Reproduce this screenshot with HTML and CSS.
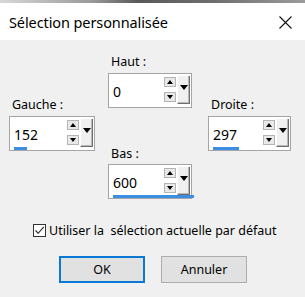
FILE: index.html
```html
<!DOCTYPE html>
<html lang="fr">
<head>
<meta charset="utf-8">
<link rel="stylesheet" href="styles.css">
</head>
<body>
<div class="top"></div>
<div class="titlebar">
  <span class="title">Sélection personnalisée</span>
  <svg class="close" width="13" height="13" viewBox="0 0 13 13"><path d="M0.5 0.5 L12.5 12.5 M12.5 0.5 L0.5 12.5" stroke="#111" stroke-width="1.1" fill="none"/></svg>
</div>
<div class="fields">
  <div class="col side">
    <div class="label">Gauche :</div>
    <div class="field">
      <div class="row">
        <div class="value">152</div>
        <div class="spins"><div class="spin"><span class="up"></span></div><div class="spin"><span class="down"></span></div></div>
        <div class="drop"><span class="dtri"></span></div>
      </div>
      <div class="barrow"><div class="bar" style="width:13px"></div></div>
    </div>
  </div>
  <div class="col mid">
    <div class="label">Haut :</div>
    <div class="field">
      <div class="row">
        <div class="value">0</div>
        <div class="spins"><div class="spin"><span class="up"></span></div><div class="spin"><span class="down"></span></div></div>
        <div class="drop"><span class="dtri"></span></div>
      </div>
      <div class="barrow"><div class="bar" style="width:0px"></div></div>
    </div>
    <div class="label second">Bas :</div>
    <div class="field">
      <div class="row">
        <div class="value">600</div>
        <div class="spins"><div class="spin"><span class="up"></span></div><div class="spin"><span class="down"></span></div></div>
        <div class="drop"><span class="dtri"></span></div>
      </div>
      <div class="barrow"><div class="bar" style="width:81px"></div></div>
    </div>
  </div>
  <div class="col side right">
    <div class="label">Droite :</div>
    <div class="field">
      <div class="row">
        <div class="value">297</div>
        <div class="spins"><div class="spin"><span class="up"></span></div><div class="spin"><span class="down"></span></div></div>
        <div class="drop"><span class="dtri"></span></div>
      </div>
      <div class="barrow"><div class="bar" style="width:26px"></div></div>
    </div>
  </div>
</div>
<div class="check">
  <span class="box"><svg width="11" height="11" viewBox="0 0 11 11"><path d="M1.5 5.5 L4.2 8.3 L9.8 1.8" stroke="#222" stroke-width="1.1" fill="none"/></svg></span>
  <span class="ctext">Utiliser la&nbsp; sélection actuelle par défaut</span>
</div>
<div class="buttons">
  <div class="btn ok">OK</div>
  <div class="btn">Annuler</div>
</div>
</body>
</html>
```
FILE: styles.css
```css
html, body {
  margin: 0;
  padding: 0;
}
body {
  width: 305px;
  height: 297px;
  overflow: hidden;
  background: #f0f0f0;
  font-family: "Noto Sans", "Open Sans", sans-serif;
  color: #000;
}
.top {
  height: 3px;
  background: linear-gradient(to right, #d8d8d8 0%, #9a9a9a 30%, #5a5a5a 45%, #6e6e6e 70%, #9c9c9c 100%);
}
.titlebar {
  height: 37px;
  background: #fff;
  display: flex;
  align-items: center;
  justify-content: space-between;
  padding: 0 13px 0 9px;
}
.title {
  font-size: 14.5px;
  color: #000;
  letter-spacing: -0.1px;
}
.close {
  display: block;
  margin-top: 1px;
}
.fields {
  display: flex;
  padding-left: 9px;
  height: 161px;
}
.col {
  display: flex;
  flex-direction: column;
  width: 86px;
}
.side {
  padding-top: 57px;
}
.mid {
  margin-left: 13px;
  padding-top: 14px;
  width: 84px;
}
.right {
  margin-left: 16px;
  width: 83px;
}
.label {
  font-size: 12.5px;
  line-height: 16px;
  height: 16px;
  padding-left: 3px;
  margin-bottom: 3px;
}
.second {
  margin-top: 38px;
  margin-bottom: 2px;
}
.field {
  border: 1px solid #a5a5a5;
  background: #fff;
  display: flex;
  flex-direction: column;
  height: 33px;
}
.row {
  display: flex;
  flex: 1;
  padding: 2px 0 0 0;
}
.value {
  flex: 1;
  font-size: 14px;
  padding-left: 4px;
  display: flex;
  align-items: center;
  padding-top: 3px;
}
.spins {
  display: flex;
  flex-direction: column;
  justify-content: space-between;
  width: 12px;
  padding: 1px 0 2px;
}
.spin {
  height: 10px;
  border: 1px solid #b4b4b4;
  background: #e9e9e9;
  display: flex;
  align-items: center;
  justify-content: center;
  box-sizing: border-box;
}
.up {
  width: 0;
  height: 0;
  border-left: 3.5px solid transparent;
  border-right: 3.5px solid transparent;
  border-bottom: 4px solid #000;
}
.down {
  width: 0;
  height: 0;
  border-left: 3.5px solid transparent;
  border-right: 3.5px solid transparent;
  border-top: 4px solid #000;
}
.drop {
  width: 13px;
  margin-left: 1px;
  margin-right: 1px;
  background: #f0f0f0;
  border-left: 1px solid #ffffff;
  border-right: 1px solid #6f6f6f;
  border-bottom: 1px solid #6f6f6f;
  box-shadow: inset -1px -1px 0 #b8b8b8;
  display: flex;
  justify-content: center;
  padding-top: 9px;
  box-sizing: border-box;
}
.dtri {
  width: 0;
  height: 0;
  border-left: 4px solid transparent;
  border-right: 4px solid transparent;
  border-top: 5px solid #000;
}
.barrow {
  height: 3px;
  padding-left: 4px;
}
.bar {
  height: 3px;
  background: #3b8ee3;
}
.check {
  display: flex;
  align-items: center;
  padding-left: 33px;
  margin-top: 21px;
  height: 16px;
}
.box {
  width: 11px;
  height: 11px;
  border: 1px solid #333;
  background: #fff;
  display: flex;
}
.ctext {
  font-size: 12.5px;
  margin-left: 3px;
}
.buttons {
  display: flex;
  padding-left: 59px;
  margin-top: 18px;
  gap: 16px;
}
.btn {
  width: 84px;
  height: 25px;
  border: 1px solid #adadad;
  background: #e1e1e1;
  font-size: 12.5px;
  display: flex;
  align-items: center;
  justify-content: center;
}
.ok {
  border: 2px solid #0a78d4;
  width: 82px;
  height: 23px;
}
```
